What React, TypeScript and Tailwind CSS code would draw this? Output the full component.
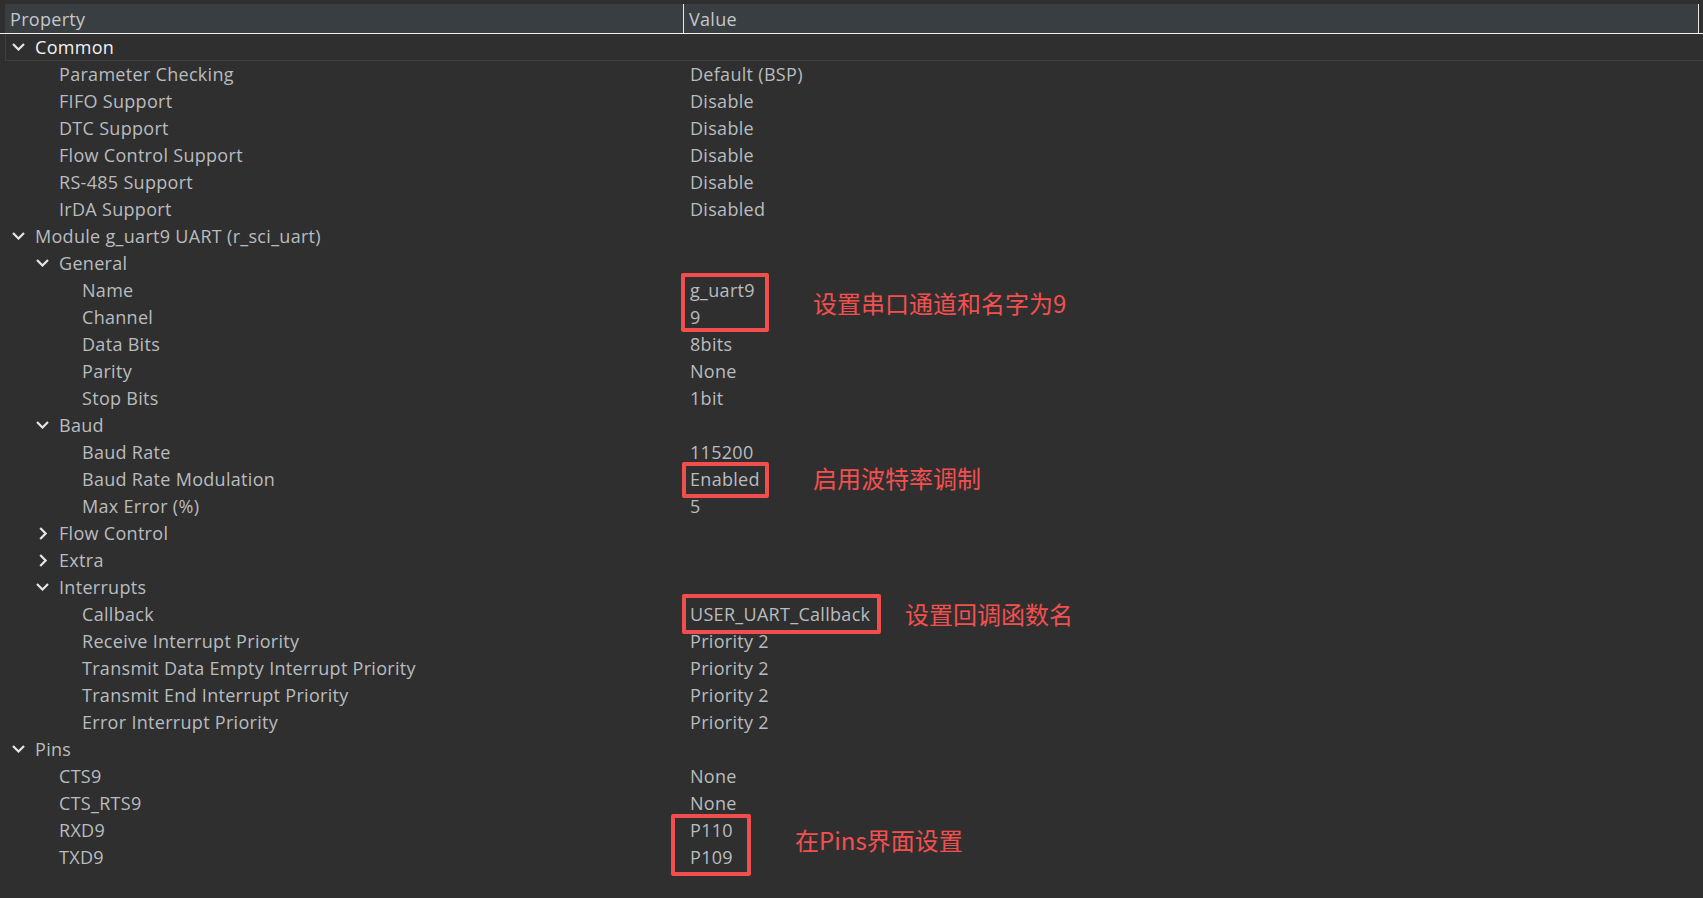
import React from "react";

type Row = {
  label: string;
  value?: string;
  level: 0 | 1 | 2;
  kind: "open" | "closed" | "leaf";
};

const rows: Row[] = [
  { label: "Parameter Checking", value: "Default (BSP)", level: 1, kind: "leaf" },
  { label: "FIFO Support", value: "Disable", level: 1, kind: "leaf" },
  { label: "DTC Support", value: "Disable", level: 1, kind: "leaf" },
  { label: "Flow Control Support", value: "Disable", level: 1, kind: "leaf" },
  { label: "RS-485 Support", value: "Disable", level: 1, kind: "leaf" },
  { label: "IrDA Support", value: "Disabled", level: 1, kind: "leaf" },
  { label: "Module g_uart9 UART (r_sci_uart)", level: 0, kind: "open" },
  { label: "General", level: 1, kind: "open" },
  { label: "Name", value: "g_uart9", level: 2, kind: "leaf" },
  { label: "Channel", value: "9", level: 2, kind: "leaf" },
  { label: "Data Bits", value: "8bits", level: 2, kind: "leaf" },
  { label: "Parity", value: "None", level: 2, kind: "leaf" },
  { label: "Stop Bits", value: "1bit", level: 2, kind: "leaf" },
  { label: "Baud", level: 1, kind: "open" },
  { label: "Baud Rate", value: "115200", level: 2, kind: "leaf" },
  { label: "Baud Rate Modulation", value: "Enabled", level: 2, kind: "leaf" },
  { label: "Max Error (%)", value: "5", level: 2, kind: "leaf" },
  { label: "Flow Control", level: 1, kind: "closed" },
  { label: "Extra", level: 1, kind: "closed" },
  { label: "Interrupts", level: 1, kind: "open" },
  { label: "Callback", value: "USER_UART_Callback", level: 2, kind: "leaf" },
  { label: "Receive Interrupt Priority", value: "Priority 2", level: 2, kind: "leaf" },
  { label: "Transmit Data Empty Interrupt Priority", value: "Priority 2", level: 2, kind: "leaf" },
  { label: "Transmit End Interrupt Priority", value: "Priority 2", level: 2, kind: "leaf" },
  { label: "Error Interrupt Priority", value: "Priority 2", level: 2, kind: "leaf" },
  { label: "Pins", level: 0, kind: "open" },
  { label: "CTS9", value: "None", level: 1, kind: "leaf" },
  { label: "CTS_RTS9", value: "None", level: 1, kind: "leaf" },
  { label: "RXD9", value: "P110", level: 1, kind: "leaf" },
  { label: "TXD9", value: "P109", level: 1, kind: "leaf" },
];

const indent: Record<number, string> = {
  0: "pl-[7px]",
  1: "pl-[31px]",
  2: "pl-[54px]",
};

function Chevron({ kind }: { kind: Row["kind"] }) {
  if (kind === "leaf") return <span className="w-[13px] mr-[10px] shrink-0" />;
  return (
    <span className="w-[13px] mr-[10px] shrink-0 flex items-center justify-center">
      {kind === "open" ? (
        <svg width="13" height="8" viewBox="0 0 13 8" fill="none">
          <path d="M1 1 L6.5 6.5 L12 1" stroke="#e6e6e6" strokeWidth="2.2" />
        </svg>
      ) : (
        <svg width="8" height="13" viewBox="0 0 8 13" fill="none">
          <path d="M1.2 1 L6.6 6.5 L1.2 12" stroke="#e6e6e6" strokeWidth="2.2" />
        </svg>
      )}
    </span>
  );
}

export default function App() {
  const font = { fontFamily: '"Open Sans", "Noto Sans", sans-serif' };
  const cjk = { fontFamily: '"Noto Sans CJK SC", "Noto Sans", sans-serif' };
  return (
    <div
      className="relative w-[1703px] h-[898px] overflow-hidden bg-[#2f2f2f] pt-[4px] text-[18px] tracking-[0.3px]"
      style={font}
    >
      {/* column header */}
      <div className="flex h-[30px] border-b border-[#f0f0f0]">
        <div className="w-[5px]" />
        <div className="flex flex-1 bg-[#393e42]">
          <div className="w-[679px] pl-[5px] pt-[1px] flex items-center text-[#c5c7c9] border-r border-[#e8e8e8]">
            Property
          </div>
          <div className="flex-1 pl-[5px] pt-[1px] flex items-center text-[#c5c7c9] border-r border-[#e8e8e8]">
            Value
          </div>
        </div>
        <div className="w-[4px]" />
      </div>

      {/* first category, focused */}
      <div className="ml-[5px] h-[27px] flex items-center border-l border-b border-[#3e3e3e] pl-[6px]">
        <Chevron kind="open" />
        <span className="text-[#f2f2f2]">Common</span>
      </div>

      {rows.map((r, i) => (
        <div key={i} className="ml-[5px] h-[27px] flex items-center pb-[1px] text-[#b9bcbf]">
          <div className={`w-[685px] shrink-0 flex items-center ${indent[r.level]}`}>
            <Chevron kind={r.kind} />
            <span className="whitespace-nowrap">{r.label}</span>
          </div>
          {r.value && <span className="whitespace-nowrap">{r.value}</span>}
        </div>
      ))}

      {/* highlighted settings */}
      <div className="absolute left-[681px] top-[273px] w-[88px] h-[59px] border-[4px] border-[#f24e4e] rounded-[2px]" />
      <div className="absolute left-[813px] top-[286px] h-[34px] flex items-center text-[24px] tracking-normal text-[#f44f4f] whitespace-nowrap" style={cjk}>
        设置串口通道和名字为9
      </div>

      <div className="absolute left-[682px] top-[462px] w-[87px] h-[36px] border-[4px] border-[#f24e4e] rounded-[2px]" />
      <div className="absolute left-[813px] top-[461px] h-[34px] flex items-center text-[24px] tracking-normal text-[#f44f4f] whitespace-nowrap" style={cjk}>
        启用波特率调制
      </div>

      <div className="absolute left-[682px] top-[594px] w-[199px] h-[40px] border-[4px] border-[#f24e4e] rounded-[2px]" />
      <div className="absolute left-[905px] top-[597px] h-[34px] flex items-center text-[24px] tracking-normal text-[#f44f4f] whitespace-nowrap" style={cjk}>
        设置回调函数名
      </div>

      <div className="absolute left-[671px] top-[814px] w-[80px] h-[62px] border-[4px] border-[#f24e4e] rounded-[2px]" />
      <div className="absolute left-[795px] top-[823px] h-[34px] flex items-center text-[24px] tracking-normal text-[#f44f4f] whitespace-nowrap" style={cjk}>
        在Pins界面设置
      </div>
    </div>
  );
}
